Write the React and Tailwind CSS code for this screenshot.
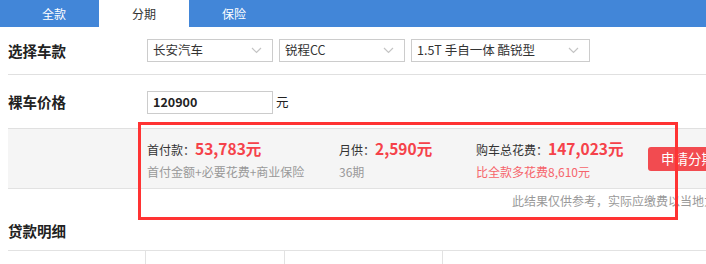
import React from 'react';

const Chevron = () => (
  <svg width="11" height="7" viewBox="0 0 11 7" className="shrink-0">
    <path d="M1 1l4.5 4.5L10 1" fill="none" stroke="#c4c4c4" strokeWidth="1.2" />
  </svg>
);

const Select = ({ text, width }) => (
  <div className={`flex h-[23px] items-center justify-between border border-[#cccccc] bg-white pl-[5px] pr-[10px] text-[12.5px] text-[#333] ${width}`}>
    <span>{text}</span>
    <Chevron />
  </div>
);

const App = () => {
  const tabs = ['全款', '分期', '保险'];

  return (
    <div
      className="relative h-[264px] w-[706px] overflow-hidden bg-white text-[#333]"
      style={{ fontFamily: '"Noto Sans CJK SC", "Noto Sans", sans-serif' }}
    >
      {/* tabs */}
      <div className="flex h-[27px] bg-[#4286d8] pl-[9px]">
        {tabs.map((t) => (
          <div
            key={t}
            className={`flex w-[90px] items-center justify-center text-[12px] ${t === '分期' ? 'bg-white text-[#333]' : 'text-white'}`}
          >
            {t}
          </div>
        ))}
      </div>

      <div className="w-[760px] pl-[8px]">
        {/* car select */}
        <div className="flex h-[48px] items-center border-b border-[#e0e0e0]">
          <div className="w-[139px] text-[14.5px] font-bold text-[#222]">选择车款</div>
          <div className="flex gap-[6px]">
            <Select text="长安汽车" width="w-[126px]" />
            <Select text="锐程CC" width="w-[126px]" />
            <Select text="1.5T 手自一体 酷锐型" width="w-[179px]" />
          </div>
        </div>

        {/* price */}
        <div className="flex h-[54px] items-center border-b border-[#e0e0e0] pt-[1px]">
          <div className="w-[139px] text-[14.5px] font-bold text-[#222]">裸车价格</div>
          <div className="flex h-[23px] w-[126px] items-center border border-[#cccccc] pl-[5px] text-[12.5px] font-bold text-[#222]">
            120900
          </div>
          <span className="ml-[3px] text-[12.5px] text-[#222]">元</span>
        </div>

        {/* result */}
        <div className="flex h-[60px] items-center border-b border-[#e2e2e2] bg-[#f5f5f5] pt-[2px]">
          <div className="ml-[139px] flex w-[192px] flex-col gap-[4px]">
            <div className="flex items-baseline text-[12px] leading-[18px]">
              <span>首付款：</span>
              <span className="text-[15.5px] font-bold text-[#f5424a]">53,783元</span>
            </div>
            <div className="text-[12px] leading-[18px] text-[#999]">首付金额+必要花费+商业保险</div>
          </div>
          <div className="flex w-[137px] flex-col gap-[4px]">
            <div className="flex items-baseline text-[12px] leading-[18px]">
              <span>月供：</span>
              <span className="text-[15.5px] font-bold text-[#f5424a]">2,590元</span>
            </div>
            <div className="text-[12px] leading-[18px] text-[#999]">36期</div>
          </div>
          <div className="flex w-[172px] flex-col gap-[4px]">
            <div className="flex items-baseline text-[12px] leading-[18px]">
              <span>购车总花费：</span>
              <span className="text-[15.5px] font-bold text-[#f5424a]">147,023元</span>
            </div>
            <div className="text-[12px] leading-[18px] text-[#f6646b]">比全款多花费8,610元</div>
          </div>
          <div className="mb-[2px] flex h-[24px] w-[84px] items-center rounded-[3px] bg-[#f24b50] pl-[13px] text-[13.5px] whitespace-nowrap text-white">
            申请分期
          </div>
        </div>

        {/* note */}
        <div className="flex h-[23px] items-center pl-[504px] text-[12px] whitespace-nowrap text-[#999]">
          此结果仅供参考，实际应缴费以当地为准
        </div>

        {/* loan detail */}
        <div className="flex h-[38px] items-center pb-[1px] text-[14.5px] font-bold text-[#222]">贷款明细</div>

        <div className="flex h-[30px] border-t border-[#e2e2e2] text-[12px] text-[#666]">
          <div className="w-[138px] border-r border-[#e2e2e2]" />
          <div className="w-[139px] border-r border-[#e2e2e2]" />
          <div className="flex w-[158px] items-end gap-[17px] border-r border-[#e2e2e2] pl-[22px] pb-[2px] leading-[12px]">
            <span className="translate-y-[9px]">30%</span>
            <span className="translate-y-[9px]">40%</span>
            <span className="translate-y-[9px]">50%</span>
          </div>
        </div>
      </div>

      {/* annotation */}
      <div className="absolute left-[138px] top-[122px] h-[98px] w-[540px] border-[3px] border-[#ff3333]" />
    </div>
  );
};

export default App;
